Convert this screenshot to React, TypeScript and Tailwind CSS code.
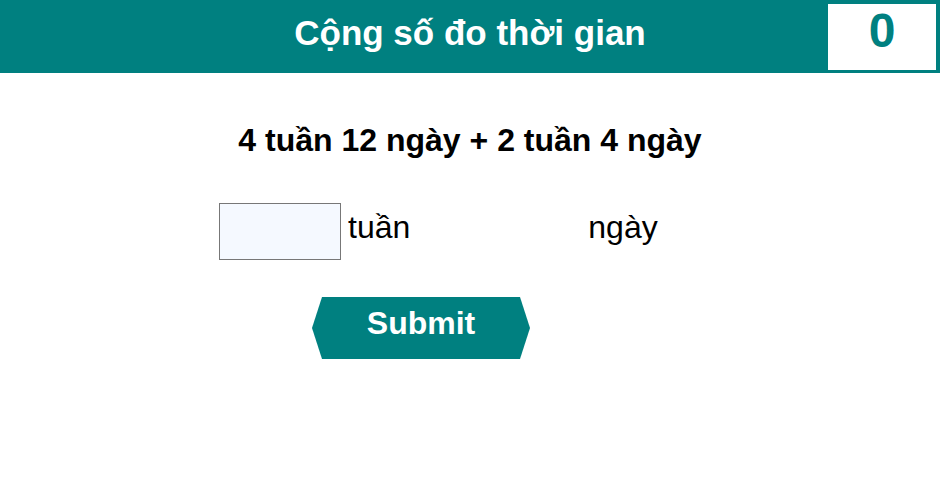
import React from "react";

export default function App() {
  return (
    <div className="w-[940px] h-[501px] bg-white" style={{ fontFamily: '"Liberation Sans", Arial, sans-serif' }}>
      <div className="relative h-[73px] bg-[#008080] flex items-center justify-center pb-[9px]">
        <div className="text-white font-bold text-[35px] leading-none">Cộng số đo thời gian</div>
        <div className="absolute left-[828px] top-[4px] w-[108px] h-[66px] bg-white flex items-center justify-center pb-[13px]">
          <span className="text-[#008080] font-bold text-[48px] leading-none">0</span>
        </div>
      </div>
      <div className="flex justify-center pt-[51px]">
        <div className="text-black font-bold text-[32px] leading-none">4 tuần 12 ngày + 2 tuần 4 ngày</div>
      </div>
      <div className="flex items-start pl-[219px] pt-[47px]">
        <div className="w-[122px] h-[57px] border border-[#777] bg-[#f5f9ff]"></div>
        <span className="ml-[7px] mt-[8px] text-[32px] leading-none text-black">tuần</span>
        <span className="ml-[178px] mt-[8px] text-[32px] leading-none text-black">ngày</span>
      </div>
      <div className="pl-[312px] pt-[37px]">
        <div
          className="w-[218px] h-[62px] bg-[#008080] flex items-center justify-center pb-[11px]"
          style={{ clipPath: "polygon(10px 0, 208px 0, 218px 50%, 208px 100%, 10px 100%, 0 50%)" }}
        >
          <span className="text-white font-bold text-[32px] leading-none">Submit</span>
        </div>
      </div>
    </div>
  );
}
